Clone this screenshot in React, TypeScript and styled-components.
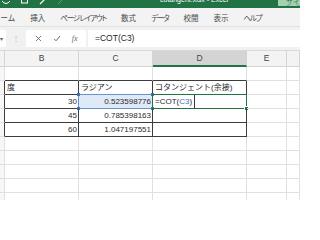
import React from 'react'
import styled, { createGlobalStyle } from 'styled-components'

const GlobalStyle = createGlobalStyle`
  html, body { margin: 0; padding: 0; }
  body {
    width: 300px;
    height: 200px;
    overflow: hidden;
    background: #ffffff;
    font-family: "Liberation Sans", "Noto Sans CJK JP", sans-serif;
  }
`

const Window = styled.div`
  width: 300px;
  height: 200px;
  overflow: hidden;
  display: flex;
  flex-direction: column;
`

const TitleBar = styled.div`
  flex: none;
  height: 8px;
  background: #217346;
  display: flex;
  align-items: flex-start;
  overflow: hidden;
`

const QuickIcons = styled.div`
  display: flex;
  gap: 10px;
  padding-left: 1px;
  width: 150px;
`

const TitleText = styled.div`
  margin-top: -5px;
  width: 118px;
  font-size: 7px;
  line-height: 9px;
  color: #ffffff;
  padding-left: 9px;
`

const SignIn = styled.div`
  flex: 1;
  height: 7px;
  background: #a3d2b2;
  overflow: hidden;
  font-size: 7px;
  line-height: 6px;
  color: #3c6e4e;
  padding-left: 8px;
  margin-top: -1px;
`

const Ribbon = styled.div`
  flex: none;
  height: 18px;
  background: #f3f3f3;
  display: flex;
  align-items: center;
  gap: 15px;
  overflow: hidden;
  font-family: "Noto Sans CJK JP", sans-serif;
  font-size: 7.5px;
  color: #4a4a4a;
  margin-left: -7px;
  padding-top: 1px;
  box-sizing: border-box;
`

const Tab = styled.span<{ $tight?: boolean }>`
  white-space: nowrap;
  font-feature-settings: ${p => (p.$tight ? '"palt"' : 'normal')};
  letter-spacing: ${p => (p.$tight ? '-1.2px' : '0')};
`

const FormulaBar = styled.div`
  flex: none;
  height: 24px;
  box-sizing: border-box;
  background: #f1f1f1;
  border-top: 1px solid #e2e2e2;
  display: flex;
  align-items: center;
  padding: 0 0 1px 0;
`

const NameBox = styled.div`
  width: 6px;
  height: 17px;
  background: #ffffff;
  display: flex;
  align-items: center;
  font-size: 6px;
  color: #666;
`

const Grip = styled.div`
  width: 20px;
  text-align: center;
  font-size: 8px;
  color: #a8a8a8;
`

const ButtonGroup = styled.div`
  width: 60px;
  height: 17px;
  background: #ffffff;
  display: flex;
  align-items: center;
  justify-content: space-around;
  padding: 0 3px;
  box-sizing: border-box;
`

const FxLabel = styled.span`
  font-family: "Liberation Serif", serif;
  font-style: italic;
  font-size: 8px;
  color: #6a6a6a;
`

const FormulaInput = styled.div`
  flex: 1;
  height: 17px;
  margin-left: 2px;
  background: #ffffff;
  font-size: 8.5px;
  line-height: 17px;
  padding-left: 7px;
  color: #262626;
`

const Sheet = styled.div`
  display: grid;
  grid-template-columns: 5px 74px 74px 94px 40px 1fr;
  grid-template-rows: 17px;
  grid-auto-rows: 14px;
`

const ColHead = styled.div<{ $selected?: boolean }>`
  box-sizing: border-box;
  background: ${p => (p.$selected ? '#d4d4d4' : '#f3f3f3')};
  border-top: 1px solid #d9d9d9;
  border-right: 1px solid #d4d4d4;
  border-bottom: ${p => (p.$selected ? '2px solid #217346' : '1px solid #d4d4d4')};
  font-size: 8.5px;
  line-height: 15px;
  text-align: center;
  color: #444444;
`

type Edge = 'grid' | 'dark'
const edge = (e?: Edge) => (e === 'dark' ? '#3c3c3c' : '#e0e0e0')

const Cell = styled.div<{ $right?: Edge; $bottom?: Edge; $align?: 'left' | 'right' }>`
  position: relative;
  box-sizing: border-box;
  border-right: 1px solid ${p => edge(p.$right)};
  border-bottom: 1px solid ${p => edge(p.$bottom)};
  padding: 0 1px 0 2px;
  font-size: 8px;
  line-height: 13px;
  text-align: ${p => p.$align ?? 'left'};
  white-space: nowrap;
  color: #2b2b2b;
`

const RowHead = styled(Cell)`
  background: #f7f7f7;
  padding: 0;
`

const RefBox = styled.div`
  position: absolute;
  left: -1px;
  top: -1px;
  right: -1px;
  bottom: -1px;
  background: rgba(196, 216, 242, 0.55);
  border: 1px solid #6d90cf;
  pointer-events: none;
`

const Handle = styled.span<{ $x: 'l' | 'r'; $y: 't' | 'b' }>`
  position: absolute;
  width: 3px;
  height: 3px;
  background: #4a6fb5;
  ${p => (p.$x === 'l' ? 'left: -2px;' : 'right: -2px;')}
  ${p => (p.$y === 't' ? 'top: -2px;' : 'bottom: -2px;')}
`

const CellText = styled.span`
  position: relative;
`

const ActiveBox = styled.div`
  position: absolute;
  left: -1px;
  top: -1px;
  right: -1px;
  bottom: -1px;
  border: 1.5px solid #217346;
  pointer-events: none;
`

const FillHandle = styled.span`
  position: absolute;
  right: -3px;
  bottom: -3px;
  width: 3px;
  height: 3px;
  background: #217346;
  border: 1px solid #ffffff;
`

const Ref = styled.span`
  color: #4472c4;
`

const Caret = styled.span`
  display: inline-block;
  width: 1px;
  height: 14px;
  margin-left: 2px;
  vertical-align: top;
  margin-top: -1px;
  background: #3a3a3a;
`

const data = [
  { deg: '30', rad: '0.523598776' },
  { deg: '45', rad: '0.785398163' },
  { deg: '60', rad: '1.047197551' },
]

export default function App() {
  return (
    <Window>
      <GlobalStyle />
      <TitleBar>
        <QuickIcons>
          <svg width="10" height="8" viewBox="0 0 10 8">
            <path d="M1 1 Q5 6 9 1" stroke="#ffffff" strokeWidth="1" fill="none" />
          </svg>
          <svg width="7" height="8" viewBox="0 0 7 8">
            <rect x="0.5" y="-2" width="6" height="5" stroke="#ffffff" strokeWidth="1" fill="none" />
          </svg>
          <svg width="8" height="8" viewBox="0 0 8 8">
            <path d="M7 -1 L2 4" stroke="#ffffff" strokeWidth="1.2" />
          </svg>
          <svg width="8" height="8" viewBox="0 0 8 8">
            <path d="M7 -1 L2 4" stroke="#5f9d78" strokeWidth="1" />
          </svg>
        </QuickIcons>
        <TitleText>cotangent.xlsx - Excel</TitleText>
        <SignIn>サインイン</SignIn>
      </TitleBar>

      <Ribbon>
        <Tab>ホーム</Tab>
        <Tab>挿入</Tab>
        <Tab $tight>ページ レイアウト</Tab>
        <Tab>数式</Tab>
        <Tab $tight>データ</Tab>
        <Tab>校閲</Tab>
        <Tab>表示</Tab>
        <Tab $tight>ヘルプ</Tab>
      </Ribbon>

      <FormulaBar>
        <NameBox>▾</NameBox>
        <Grip>⋮</Grip>
        <ButtonGroup>
          <svg width="7" height="7" viewBox="0 0 7 7">
            <path d="M1 1 L6 6 M6 1 L1 6" stroke="#6a6a6a" strokeWidth="0.9" />
          </svg>
          <svg width="8" height="7" viewBox="0 0 8 7">
            <path d="M1 3.8 L3 5.8 L7 1" stroke="#6a6a6a" strokeWidth="1" fill="none" />
          </svg>
          <FxLabel>fx</FxLabel>
        </ButtonGroup>
        <FormulaInput>=COT(C3)</FormulaInput>
      </FormulaBar>

      <Sheet>
        <ColHead />
        <ColHead>B</ColHead>
        <ColHead>C</ColHead>
        <ColHead $selected>D</ColHead>
        <ColHead>E</ColHead>
        <ColHead />

        <RowHead />
        <Cell $bottom="dark" />
        <Cell $bottom="dark" />
        <Cell $bottom="dark" />
        <Cell />
        <Cell />

        <RowHead $right="dark" />
        <Cell $right="dark" $bottom="dark">度</Cell>
        <Cell $right="dark" $bottom="dark">ラジアン</Cell>
        <Cell $right="dark" $bottom="dark">コタンジェント(余接)</Cell>
        <Cell />
        <Cell />

        {data.map((row, i) => (
          <React.Fragment key={row.deg}>
            <RowHead $right="dark" />
            <Cell $right="dark" $bottom="dark" $align="right">{row.deg}</Cell>
            <Cell $right="dark" $bottom="dark" $align="right">
              {i === 0 && (
                <RefBox>
                  <Handle $x="l" $y="t" />
                  <Handle $x="r" $y="t" />
                  <Handle $x="l" $y="b" />
                  <Handle $x="r" $y="b" />
                </RefBox>
              )}
              <CellText>{row.rad}</CellText>
            </Cell>
            <Cell $right="dark" $bottom="dark">
              {i === 0 && (
                <>
                  =COT(<Ref>C3</Ref>)<Caret />
                  <ActiveBox>
                    <FillHandle />
                  </ActiveBox>
                </>
              )}
            </Cell>
            <Cell />
            <Cell />
          </React.Fragment>
        ))}

        {Array.from({ length: 5 }).map((_, i) => (
          <React.Fragment key={i}>
            <RowHead />
            <Cell />
            <Cell />
            <Cell />
            <Cell />
            <Cell />
          </React.Fragment>
        ))}
      </Sheet>
    </Window>
  )
}
